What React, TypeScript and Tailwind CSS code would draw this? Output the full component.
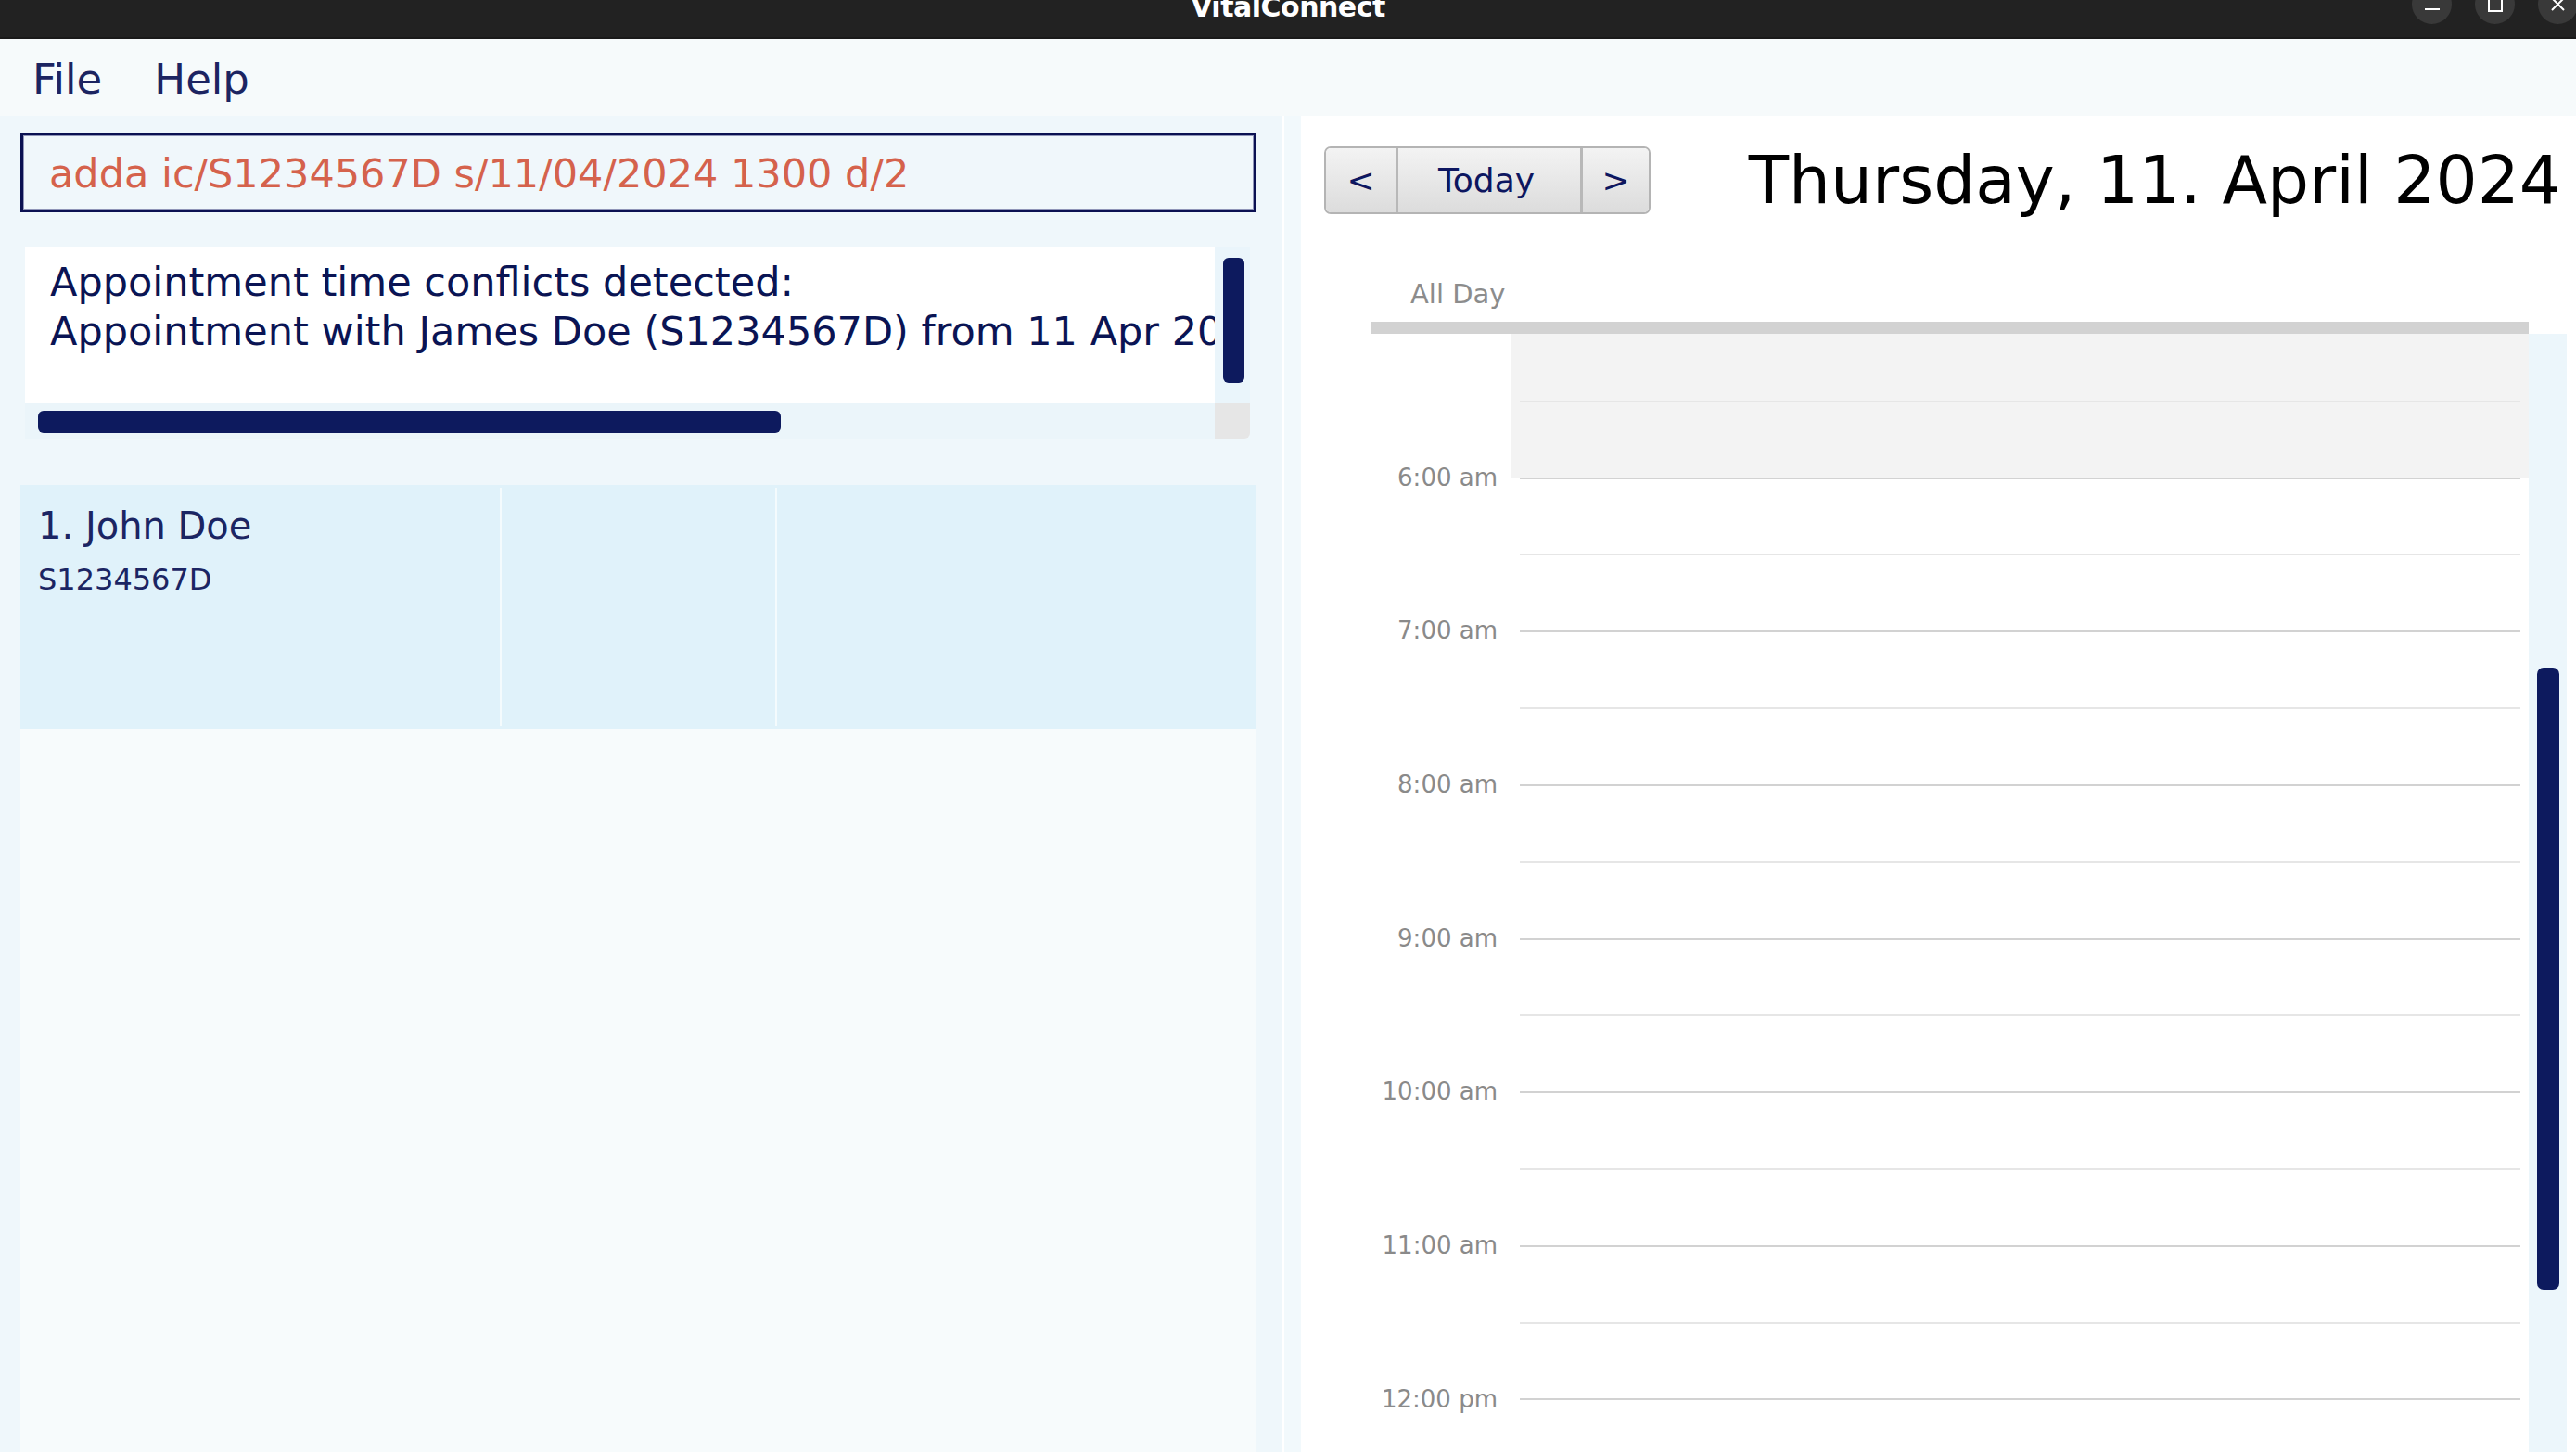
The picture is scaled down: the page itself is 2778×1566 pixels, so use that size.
import React from "react";

const hours = [
  "5:00 am",
  "6:00 am",
  "7:00 am",
  "8:00 am",
  "9:00 am",
  "10:00 am",
  "11:00 am",
  "12:00 pm",
  "1:00 pm",
];

const TitleBar: React.FC = () => (
  <div className="h-[42px] bg-[#222222] border-b-2 border-[#1a1a1a] flex items-start relative overflow-hidden">
    <div className="flex-1 flex justify-center">
      <span className="text-[30px] leading-[30px] -mt-[7px] font-bold text-white font-['DejaVu_Sans',sans-serif] tracking-[-0.5px]">
        VitalConnect
      </span>
    </div>
    {/* window controls */}
    <div className="absolute right-[-2px] top-[-17px] flex gap-[25px]">
      <div className="w-[43px] h-[43px] rounded-full bg-[#393939] flex items-end justify-center pb-[15px]">
        <div className="w-[16px] h-[2px] bg-white" />
      </div>
      <div className="w-[43px] h-[43px] rounded-full bg-[#393939] flex items-end justify-center pb-[13px]">
        <div className="w-[16px] h-[16px] border-2 border-white" />
      </div>
      <div className="w-[43px] h-[43px] rounded-full bg-[#393939] flex items-end justify-center pb-[13px]">
        <svg width="17" height="17" viewBox="0 0 17 17" fill="none" stroke="white" strokeWidth={2}>
          <path d="M2 2l13 13M15 2L2 15" />
        </svg>
      </div>
    </div>
  </div>
);

const MenuBar: React.FC = () => (
  <div className="h-[83px] bg-[#f6fafb] flex items-center gap-[56px] pl-[35px] text-[45px] text-[#1c2461] leading-none pt-[4px]">
    <span>File</span>
    <span>Help</span>
  </div>
);

const LeftPanel: React.FC = () => (
  <div className="w-[1382px] bg-[#eff7fb] flex flex-col pt-[18px]">
    {/* command box */}
    <div className="ml-[22px] w-[1333px] h-[86px] border-[3px] border-[#0b1152] bg-[#f0f7fb] shadow-[inset_0_0_0_1px_#9095b8] flex items-center pl-[28px] pt-[2px]">
      <span className="text-[43px] text-[#d5624c] leading-none">
        adda ic/S1234567D s/11/04/2024 1300 d/2
      </span>
    </div>

    {/* result display */}
    <div className="ml-[27px] mt-[37px] w-[1321px] flex flex-col">
      <div className="flex h-[169px]">
        <div className="flex-1 bg-white overflow-hidden pl-[27px] pt-[12px] text-[43px] leading-[53px] text-[#0a1454] whitespace-nowrap">
          <div>Appointment time conflicts detected:</div>
          <div>Appointment with James Doe (S1234567D) from 11 Apr 2024 1300 to 11 Apr 2024 1500</div>
        </div>
        <div className="w-[38px] bg-[#eaf5fb] pt-[12px] pl-[9px]">
          <div className="w-[23px] h-[135px] rounded-[6px] bg-[#0d1a5e]" />
        </div>
      </div>
      <div className="flex h-[38px]">
        <div className="flex-1 bg-[#ebf5fa] pt-[8px] pl-[14px]">
          <div className="w-[801px] h-[24px] rounded-[6px] bg-[#0d1a5e]" />
        </div>
        <div className="w-[38px] bg-[#e6e6e6] rounded-br-[6px]" />
      </div>
    </div>

    {/* person list */}
    <div className="ml-[22px] mt-[50px] w-[1332px] flex-1 bg-[#f7fbfc]">
      <div className="h-[263px] bg-[#e0f2fa] flex py-[3px]">
        <div className="w-[517px] pl-[19px] pt-[17px] text-[#1b2563]">
          <div className="text-[40px] leading-[48px]">1. John Doe</div>
          <div className="text-[32px] leading-[40px] mt-[14px]">S1234567D</div>
        </div>
        <div className="w-[2px] bg-[#f4fbfd]" />
        <div className="w-[295px]" />
        <div className="w-[2px] bg-[#f4fbfd]" />
        <div className="flex-1" />
      </div>
    </div>
  </div>
);

const NavButtons: React.FC = () => (
  <div className="flex h-[73px] border-2 border-[#b4b4b4] rounded-[7px] overflow-hidden text-[36px] text-[#0d1660] leading-none">
    <div className="w-[75px] bg-gradient-to-b from-[#f3f3f3] to-[#dcdcdc] flex items-center justify-center">&lt;</div>
    <div className="w-[3px] bg-[#b8b8b8]" />
    <div className="w-[196px] bg-gradient-to-b from-[#f3f3f3] to-[#dcdcdc] flex items-center justify-center pr-[6px]">Today</div>
    <div className="w-[3px] bg-[#b8b8b8]" />
    <div className="flex-1 bg-gradient-to-b from-[#f3f3f3] to-[#dcdcdc] flex items-center justify-center">&gt;</div>
  </div>
);

const CalendarPanel: React.FC = () => (
  <div className="flex-1 bg-white flex flex-col overflow-hidden">
    {/* header */}
    <div className="flex items-center pt-[33px] pl-[25px] pr-[16px]">
      <div className="w-[352px]">
        <NavButtons />
      </div>
      <div className="ml-auto text-[71px] leading-none text-black whitespace-nowrap">
        Thursday, 11. April 2024
      </div>
    </div>

    {/* all day */}
    <div className="h-[116px] pt-[72px] pl-[118px] text-[29px] leading-none text-[#8c8c8c]">All Day</div>
    <div className="ml-[75px] w-[1249px] h-[13px] bg-[#d2d2d2]" />

    {/* time grid */}
    <div className="flex-1 flex pl-[75px] overflow-hidden">
      <div className="w-[152px] flex flex-col overflow-hidden">
        <div className="-mt-[93.8px] flex flex-col">
          {hours.map((h, i) => (
            <div
              key={h}
              className="h-[165.65px] shrink-0 flex items-center justify-end pr-[15px] text-[26px] leading-none text-[#8a8a8a]"
            >
              {i === 0 ? "" : h}
            </div>
          ))}
        </div>
      </div>

      <div className="w-[1097px] flex flex-col overflow-hidden">
        <div className="-mt-[11px] flex flex-col">
          {hours.map((h, i) => (
            <div
              key={h}
              className={`h-[165.65px] shrink-0 flex flex-col ${i === 0 ? "bg-[#f3f3f3]" : "bg-white"}`}
            >
              <div className="h-[82.8px] px-[9px]">
                <div className="h-[2px] bg-[#d2d2d2]" />
              </div>
              <div className="flex-1 px-[9px]">
                <div className="h-[2px] bg-[#e6e6e6]" />
              </div>
            </div>
          ))}
        </div>
      </div>

      {/* scrollbar */}
      <div className="w-[41px] bg-[#ecf6fb] pt-[360px] pl-[9px]">
        <div className="w-[24px] h-[671px] rounded-[7px] bg-[#0d1a5e]" />
      </div>
    </div>
  </div>
);

export default function App() {
  return (
    <div className="w-[2778px] h-[1566px] overflow-hidden flex flex-col font-['DejaVu_Sans',sans-serif]">
      <TitleBar />
      <MenuBar />
      <div className="flex-1 flex min-h-0">
        <LeftPanel />
        <div className="w-[3px] bg-white" />
        <div className="w-[18px] bg-[#f2f9fc]" />
        <CalendarPanel />
      </div>
    </div>
  );
}
